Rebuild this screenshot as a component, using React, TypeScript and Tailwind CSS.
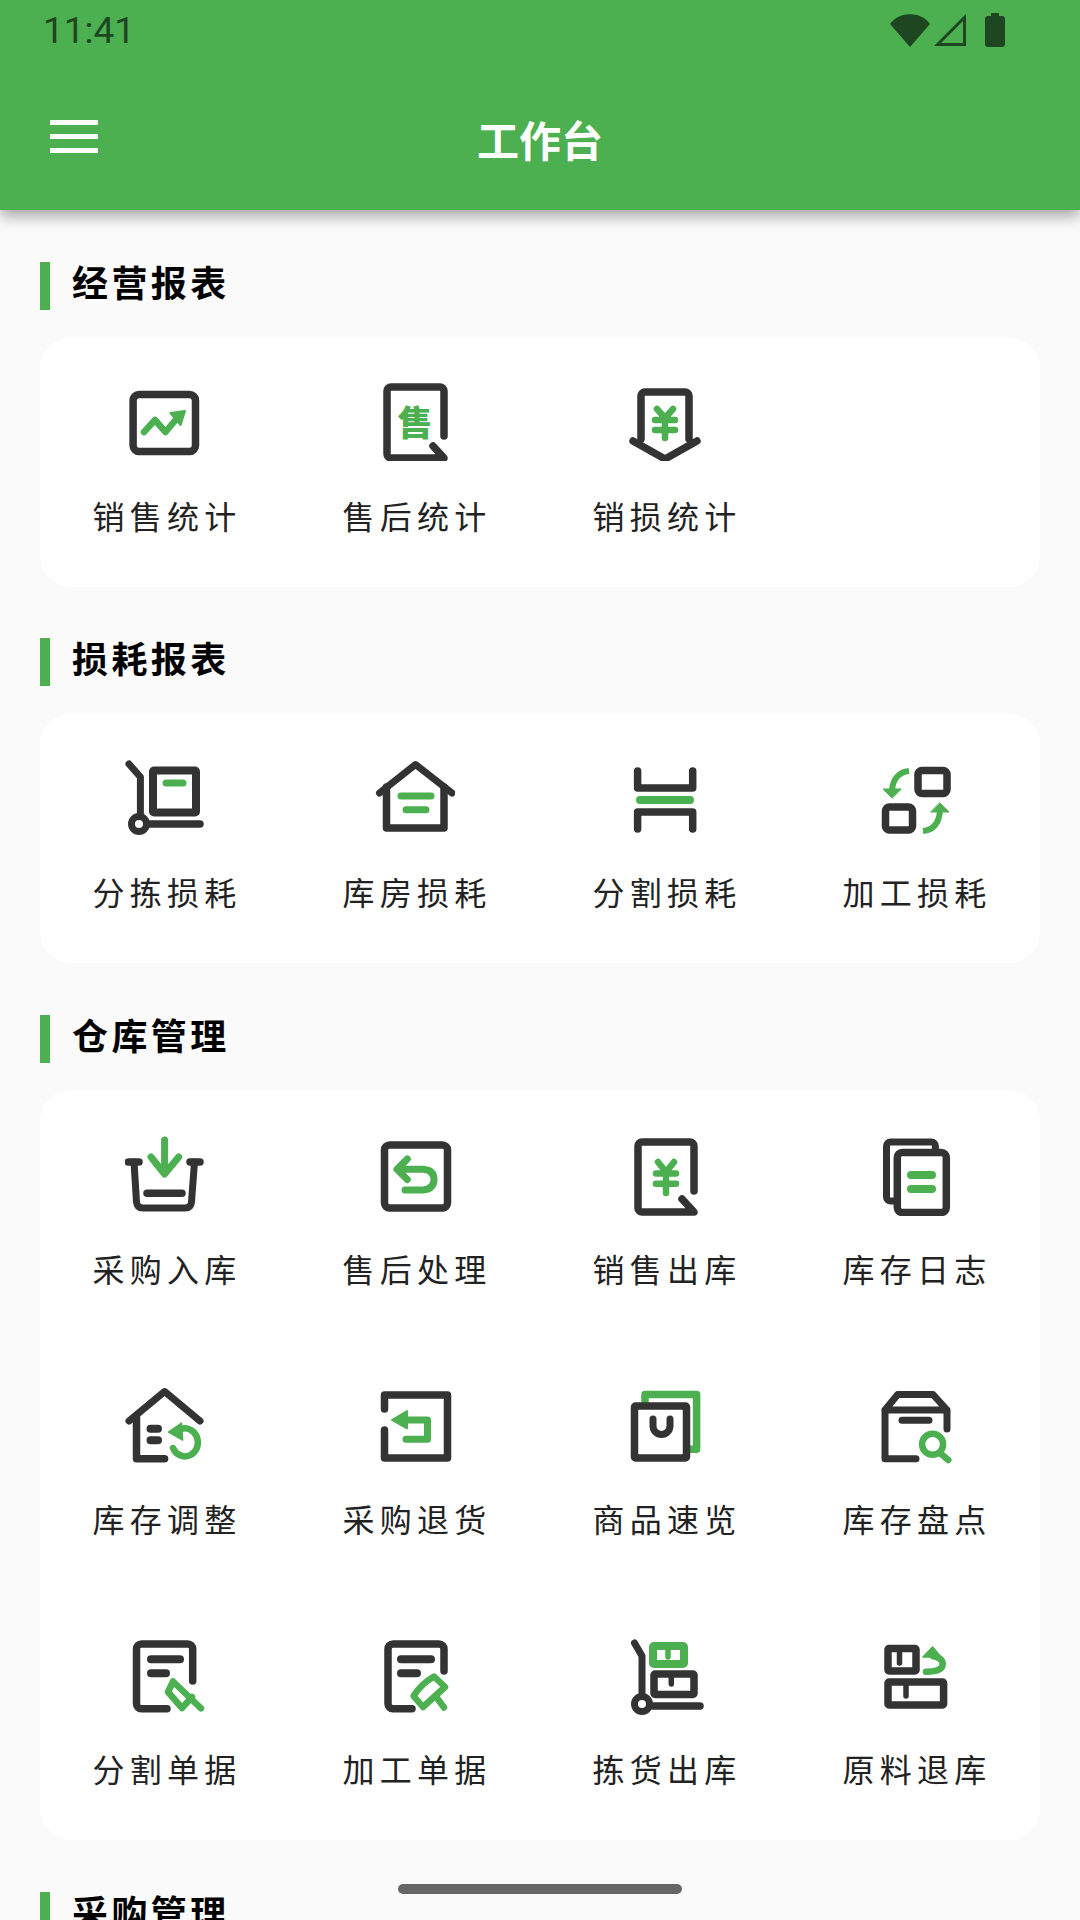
import * as React from "react";

const DARK = "#333333";
const GREEN = "#4CAF50";

// all icons sit in an 80x80 box, drawn with round strokes
function Ico({ children, sw = 7.5 }: { children: React.ReactNode; sw?: number }) {
  return (
    <svg width="80" height="80" viewBox="0 0 80 80" fill="none" strokeWidth={sw} strokeLinecap="round" strokeLinejoin="round">
      {children}
    </svg>
  );
}

function Dark({ d, sw }: { d: string; sw?: number }) {
  return <path d={d} stroke={DARK} strokeWidth={sw} />;
}

function Green({ d, sw }: { d: string; sw?: number }) {
  return <path d={d} stroke={GREEN} strokeWidth={sw} />;
}

const icons: Record<string, React.ReactNode> = {
  销售统计: (
    <Ico sw={7.5}>
      <rect x="8.1" y="13.5" width="62.4" height="57" rx="6" stroke={DARK} />
      <Green d="M19 51 L30 39 L40.5 51 L53 36" sw={6.5} />
      <path d="M60 30 L45.4 32 L55.6 44 Z" fill={GREEN} stroke={GREEN} strokeWidth={2} />
    </Ico>
  ),
  售后统计: (
    <Ico>
      <Dark d="M69 55 V10 a4 4 0 0 0 -4 -4 H16 a4 4 0 0 0 -4 4 V73 a4 4 0 0 0 4 4 H69 L58 65" />
      <text x="40" y="55" textAnchor="middle" fontSize="35" fontWeight="900" fill={GREEN} stroke="none" fontFamily="'Noto Sans CJK SC', sans-serif">售</text>
    </Ico>
  ),
  销损统计: (
    <Ico>
      <Dark d="M16 58 V15 a4 4 0 0 1 4 -4 H60 a4 4 0 0 1 4 4 V58" />
      <Dark d="M8 60 L40 78 L72 60" />
      <Green d="M32 28 L40 37 L48 28 M30 39 H50 M30 49 H50 M40 37 V57" sw={6.5} />
    </Ico>
  ),
  分拣损耗: (
    <Ico>
      <Dark d="M4 7 L15.4 20 V57" sw={7} />
      <circle cx="14" cy="67" r="7.5" stroke={DARK} strokeWidth={7} />
      <Dark d="M25 67 H75" sw={7.5} />
      <rect x="28" y="13.5" width="43" height="42" rx="1" stroke={DARK} strokeWidth={8} />
      <Green d="M41 26 H58" sw={7} />
    </Ico>
  ),
  库房损耗: (
    <Ico>
      <Dark d="M4.5 36 L40.5 7.5 L77 36" sw={7} />
      <Dark d="M11.5 30 V71 H69 V30" />
      <Green d="M26 39 H56 M31 52.7 H51" sw={7} />
    </Ico>
  ),
  分割损耗: (
    <Ico>
      <Dark d="M12.6 14 V31 H67.7 V14" />
      <Green d="M15 43 H65" sw={8} />
      <Dark d="M12.6 72 V55 H67.7 V72" />
    </Ico>
  ),
  加工损耗: (
    <Ico>
      <rect x="43" y="13.5" width="29" height="23" rx="4" stroke={DARK} />
      <rect x="10.5" y="50" width="27" height="23" rx="4" stroke={DARK} />
      <path d="M34 14 C24 15 18 22 17 33" stroke={GREEN} strokeWidth={6} strokeLinecap="butt" />
      <path d="M17 41 L8 32 H26 Z" fill={GREEN} stroke={GREEN} strokeWidth={1} />
      <path d="M48 74 C58 73 64 66 65 54" stroke={GREEN} strokeWidth={6} strokeLinecap="butt" />
      <path d="M65 46 L74 55 H56 Z" fill={GREEN} stroke={GREEN} strokeWidth={1} />
    </Ico>
  ),
  采购入库: (
    <Ico sw={7}>
      <Dark d="M3.3 26 H14 M65 26 H75" sw={7.5} />
      <Dark d="M9 26 L11.5 66 Q12 72 18 72 H60 Q66 72 66.5 66 L69.5 26" />
      <Dark d="M22 57.3 H57" sw={7.5} />
      <Green d="M39.6 4 V35 M26 21 L39.6 38 L53.7 21" />
    </Ico>
  ),
  售后处理: (
    <Ico sw={7.5}>
      <rect x="9.5" y="9" width="63" height="63" rx="5" stroke={DARK} />
      <Green d="M32.3 23 L22 33.3 L32.3 43.5 M24 33.3 H48 Q59 34 59 43.5 Q59 53 48 54 H30" sw={7} />
    </Ico>
  ),
  销售出库: (
    <Ico>
      <Dark d="M69 55 V10 a4 4 0 0 0 -4 -4 H17 a4 4 0 0 0 -4 4 V72 a4 4 0 0 0 4 4 H69 L57 63" />
      <Green d="M33 26 L41 36 L49 26 M31 37.5 H51 M31 47.7 H51 M41 36 V57" sw={6.5} />
    </Ico>
  ),
  库存日志: (
    <Ico>
      <Dark d="M60.4 13 V10 a4 4 0 0 0 -4 -4 H15.5 a4 4 0 0 0 -4 4 V61 a4 4 0 0 0 4 4 H20" sw={7} />
      <rect x="22.3" y="16.5" width="49" height="60" rx="5" stroke={DARK} />
      <Green d="M36 39 H57 M36 53 H57" sw={8} />
    </Ico>
  ),
  库存调整: (
    <Ico>
      <Dark d="M4 35 L39.6 5.5 L75 35" sw={7} />
      <Dark d="M11.5 30 V72.7 H39.6" />
      <Dark d="M25.5 42.7 H33 M25.5 54.3 H33" sw={8} />
      <Green d="M48 62 A13 14 0 1 0 56 43" sw={6.5} />
      <path d="M43.5 46 L56.5 37 L57.6 54 Z" fill={GREEN} stroke={GREEN} strokeWidth={1.5} />
    </Ico>
  ),
  采购退货: (
    <Ico sw={7.5}>
      <Dark d="M9.5 23 V9 H72.5 V72 H9.5 V44" />
      <path d="M17 34 L32 25 V42.3 Z" fill={GREEN} stroke={GREEN} strokeWidth={2} />
      <Green d="M30 34 H52.5 V53.3 H31" sw={7} />
    </Ico>
  ),
  商品速览: (
    <Ico>
      <Green d="M20 15 V8.5 H71.6 V63.3 H66" sw={7.5} />
      <rect x="9.5" y="20" width="52" height="52" rx="1" stroke={DARK} strokeWidth={7.5} />
      <Dark d="M28 33 V40 a8.5 8.5 0 0 0 17 0 V33" sw={7} />
    </Ico>
  ),
  库存盘点: (
    <Ico>
      <Dark d="M10 24 L22.7 8.5 H58 L72 24 V43 M10 24 H72 M10 24 V72.7 H41" sw={7} />
      <Dark d="M27 34.3 H54" sw={7} />
      <circle cx="57.6" cy="58.3" r="10.5" stroke={GREEN} strokeWidth={6.5} />
      <Green d="M65 67 L73.3 74" sw={6.5} />
    </Ico>
  ),
  分割单据: (
    <Ico>
      <Dark d="M67.7 45 V13 a5 5 0 0 0 -5 -5 H16.5 a5 5 0 0 0 -5 5 V67.7 a5 5 0 0 0 5 5 H42" />
      <Dark d="M26 23.3 H55 M26 37.3 H41" sw={8} />
      <Green d="M48 45.5 L76 72.3 M48 45.5 L43 56 L57 72 L67 61" sw={6.5} />
    </Ico>
  ),
  加工单据: (
    <Ico>
      <Dark d="M69 35 V13 a5 5 0 0 0 -5 -5 H18 a5 5 0 0 0 -5 5 V67.7 a5 5 0 0 0 5 5 H37" />
      <Dark d="M26 23.3 H56 M26 37.3 H42" sw={8} />
      <Green d="M59 40.5 L70 51 L48 71 L38.5 60 Q46 48 59 40.5 Z M62 62 L69 71.5" sw={6.5} />
    </Ico>
  ),
  拣货出库: (
    <Ico sw={7}>
      <Dark d="M9.5 7 L17 20 V58" />
      <circle cx="17" cy="68" r="7.5" stroke={DARK} />
      <Dark d="M28 70 H75" sw={7.5} />
      <rect x="29" y="38" width="40" height="20.5" rx="1" stroke={DARK} strokeWidth={7.5} />
      <Dark d="M46.3 41 V48" sw={5.5} />
      <rect x="28" y="10" width="31" height="18" rx="1" stroke={GREEN} strokeWidth={8} />
      <Green d="M43 13 V21" sw={5.5} />
    </Ico>
  ),
  原料退库: (
    <Ico>
      <rect x="13" y="12.5" width="28" height="22.5" rx="1" stroke={DARK} />
      <Dark d="M24.5 14 V27" sw={5.5} />
      <rect x="13" y="46" width="55.6" height="23" rx="1" stroke={DARK} />
      <Dark d="M31 48 V60" sw={5.5} />
      <path d="M57.6 11 L48 21 H66 Z" fill={GREEN} stroke={GREEN} strokeWidth={1.5} />
      <Green d="M57.6 20 Q67.7 22 67.7 28 Q67.7 35.7 51 35.7" sw={6.5} />
    </Ico>
  ),
};

const sections = [
  { title: "经营报表", gap: "mb-[51px]", low: false, items: ["销售统计", "售后统计", "销损统计"] },
  { title: "损耗报表", gap: "mb-[52px]", low: false, items: ["分拣损耗", "库房损耗", "分割损耗", "加工损耗"] },
  {
    title: "仓库管理",
    gap: "mb-[52px]",
    low: true,
    items: [
      "采购入库", "售后处理", "销售出库", "库存日志",
      "库存调整", "采购退货", "商品速览", "库存盘点",
      "分割单据", "加工单据", "拣货出库", "原料退库",
    ],
  },
  { title: "采购管理", gap: "mb-[52px]", low: false, items: [] as string[] },
];

function Cell({ label, low }: { label: string; low: boolean }) {
  return (
    <div className={low ? "flex h-[250px] flex-col items-center pt-[46px]" : "flex h-[250px] flex-col items-center pt-[44px]"}>
      {icons[label]}
      <span
        className={
          low
            ? "mt-[30px] pl-[4px] text-[32px] leading-[44px] tracking-[5.3px] text-[#222222]"
            : "mt-[32px] pl-[4px] text-[32px] leading-[44px] tracking-[5.3px] text-[#222222]"
        }
      >
        {label}
      </span>
    </div>
  );
}

function Section({ title, items, gap, low }: { title: string; items: string[]; gap: string; low: boolean }) {
  return (
    <section className={gap}>
      <div className="mb-[27px] flex h-[48px] items-center">
        <div className="h-[48px] w-[10px] bg-[#4CAF50]" />
        <h2 className="mb-[10px] ml-[22px] text-[36px] font-bold leading-[48px] tracking-[3.4px] text-black">{title}</h2>
      </div>
      {items.length > 0 && (
        <div className="grid grid-cols-4 rounded-[32px] bg-white">
          {items.map((it) => (
            <Cell key={it} label={it} low={low} />
          ))}
        </div>
      )}
    </section>
  );
}

export default function App() {
  return (
    <div
      className="relative flex h-[1920px] w-[1080px] flex-col overflow-hidden bg-[#fafafa]"
      style={{ fontFamily: "'Noto Sans CJK SC', sans-serif" }}
    >
      <header className="relative z-10 flex h-[210px] shrink-0 flex-col bg-[#4CAF50] shadow-[0_6px_14px_rgba(0,0,0,0.35)]">
        {/* status bar */}
        <div className="flex h-[60px] items-center justify-between pl-[43px] pr-[75px]">
          <span className="mt-[2px] font-['Roboto'] text-[37px] leading-[60px] text-[#1e4620]">11:41</span>
          <div className="flex items-center">
            <svg width="40" height="33" viewBox="0 0 40 33">
              <path d="M0 10 C9 -3 31 -3 40 10 L20 33 Z" fill="#1e4620" />
            </svg>
            <svg className="ml-[4px]" width="32" height="32" viewBox="0 0 32 32" fill="none">
              <path d="M30.5 3.5 V30.5 H3.5 Z" stroke="#1e4620" strokeWidth="3" />
            </svg>
            <svg className="ml-[19px]" width="20" height="34" viewBox="0 0 20 34">
              <path d="M6 0 H14 V3 H17 a3 3 0 0 1 3 3 V31 a3 3 0 0 1 -3 3 H3 a3 3 0 0 1 -3 -3 V6 a3 3 0 0 1 3 -3 H6 Z" fill="#1e4620" />
            </svg>
          </div>
        </div>
        {/* toolbar */}
        <div className="grid flex-1 grid-cols-[1fr_auto_1fr] items-center">
          <svg className="ml-[50px] mt-[2px]" width="48" height="33" viewBox="0 0 48 33">
            <rect y="0" width="48" height="5" fill="#fff" />
            <rect y="14" width="48" height="5" fill="#fff" />
            <rect y="28" width="48" height="5" fill="#fff" />
          </svg>
          <h1 className="mt-[7px] text-[42px] font-bold leading-[56px] text-white">工作台</h1>
          <div />
        </div>
      </header>

      <main className="px-[40px] pt-[52px]">
        {sections.map((s) => (
          <Section key={s.title} title={s.title} items={s.items} gap={s.gap} low={s.low} />
        ))}
      </main>

      {/* gesture pill */}
      <div className="absolute bottom-[26px] left-[398px] h-[10px] w-[284px] rounded-full bg-[#666666]" />
    </div>
  );
}
